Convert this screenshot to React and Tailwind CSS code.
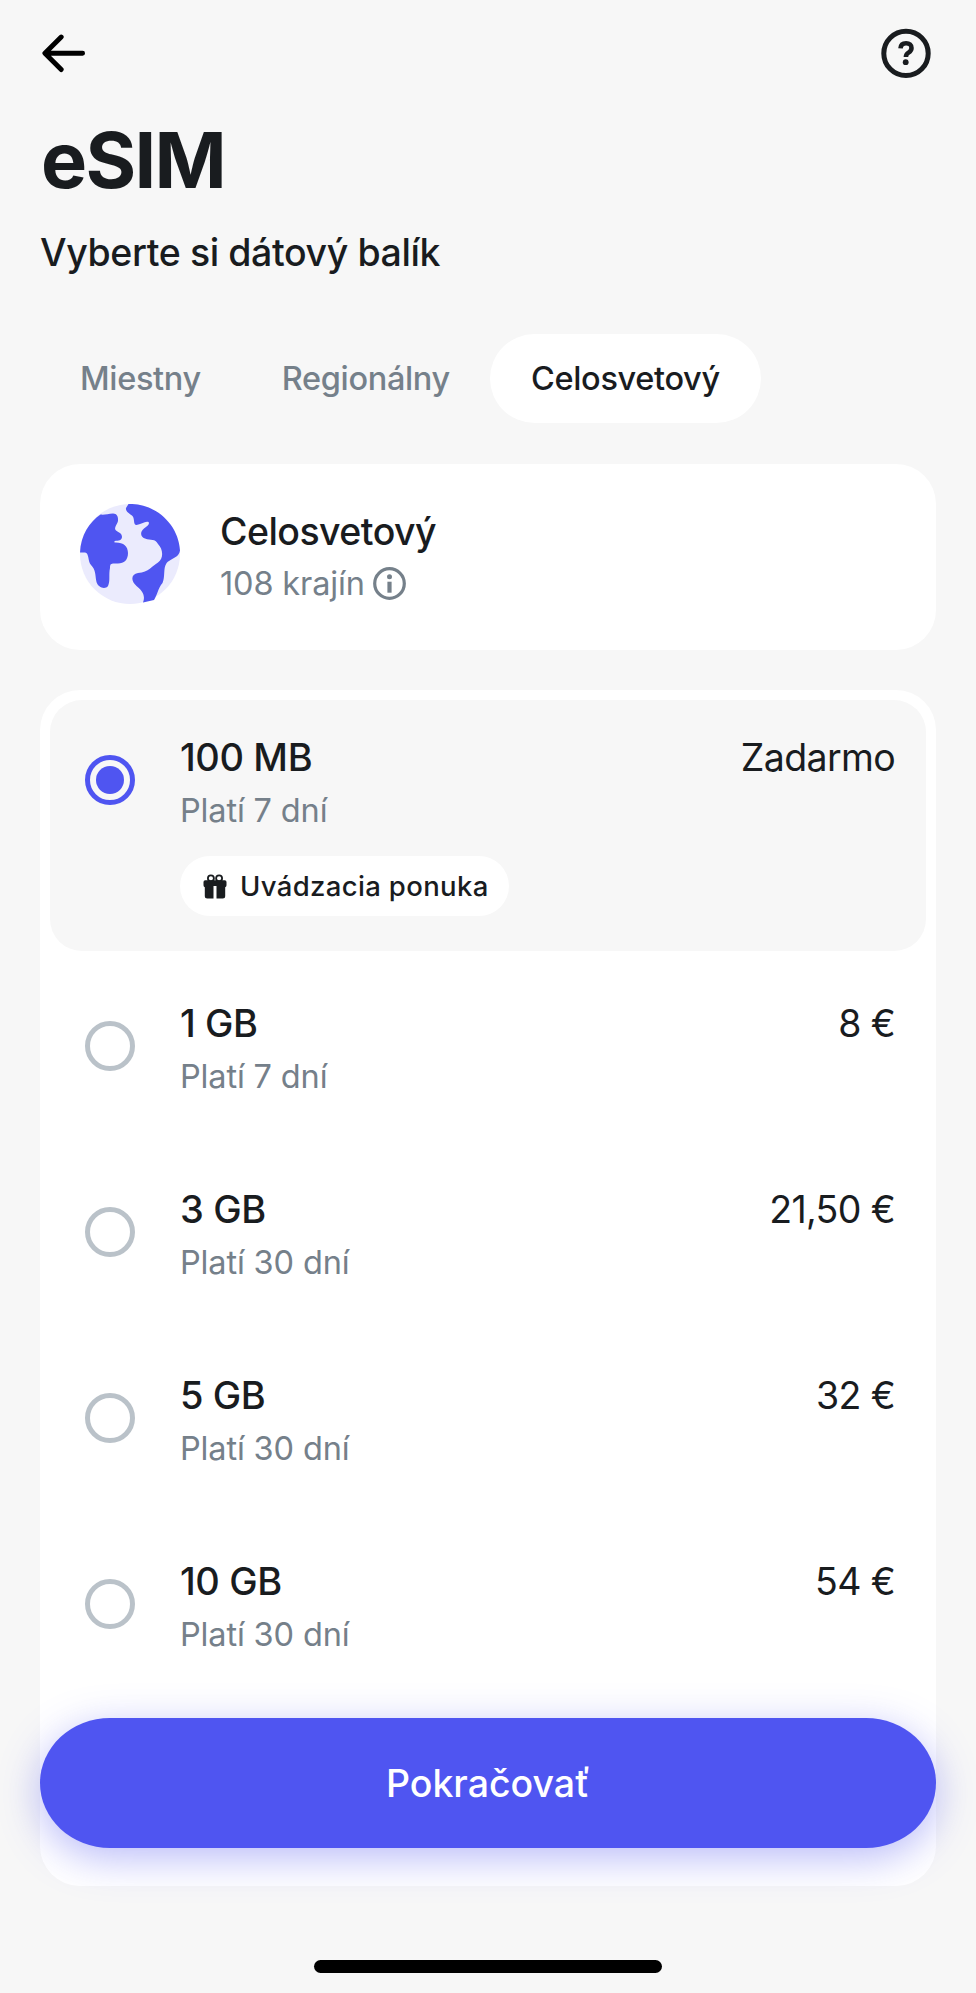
const plans = [
  { size: '1 GB', validity: 'Platí 7 dní', price: '8 €' },
  { size: '3 GB', validity: 'Platí 30 dní', price: '21,50 €' },
  { size: '5 GB', validity: 'Platí 30 dní', price: '32 €' },
  { size: '10 GB', validity: 'Platí 30 dní', price: '54 €' },
];

function BackIcon() {
  return (
    <svg width="45" height="40" viewBox="0 0 45 40" fill="none" stroke="#000" strokeWidth="4.9" strokeLinecap="round" strokeLinejoin="round">
      <path d="M41.600 20.300H4.200M20.200 4 3.900 20.300 20.200 36.600" />
    </svg>
  );
}

function HelpIcon() {
  return (
    <svg width="50" height="51" viewBox="0 0 50 51" fill="none">
      <circle cx="25" cy="25.400" r="22.200" stroke="#191c1f" strokeWidth="5" />
      <path d="M19.500 20.400C19.700 17 21.800 15.200 25.100 15.200C28.400 15.200 30.500 17.100 30.500 19.900C30.500 22.200 29.300 23.400 27.500 24.600C25.600 25.800 24.900 26.700 24.900 29.100" stroke="#191c1f" strokeWidth="4.600" />
      <circle cx="24.700" cy="34.200" r="2.900" fill="#191c1f" />
    </svg>
  );
}

function GlobeIcon() {
  return (
    <svg width="100" height="100" viewBox="0 0 100 100">
      <circle cx="50" cy="50" r="50" fill="#ebebfd" />
      <path fill="#4f55f1" d="M20.500 10.500C24 11 28 10 33 9.500C37 9.500 38.500 13 38 17C37 21 33.500 24 36 26.500C39 29 42 29 42 33C41.500 36.500 39 36.500 34.500 37V38.500C43 38 48 42 48 49C48 56 44 59.500 38 59.500C32 59.500 30 58.500 30 64C28.500 71 30.500 77 28 82C25 86 18 83.500 16.500 78C15 71 16 66 11 61C7.500 58 9.500 49 5 48.500L0 48.500C.8 31 9.500 18 20.500 10.500Z" />
      <path fill="#4f55f1" d="M48.500 0C74 -1 98.500 19 100 46.500C99 53 93 54 89 57C82 61 86 72 82.500 79C78 84 77 92 74 96L63 98.500C66 91 61.500 86 56.500 82C50.500 77 51 70 58 69C69 68 72 62 78 58.500C84 54 83 45 78 40C75 34 71 37 65 34.500C60 33 60 27.500 64 24.500C67.500 22 70 20 68.500 18C66 16.500 61 20 56.500 21C53 21 55 15 52.500 12C49 9 45.500 7.500 46 4Z" />
    </svg>
  );
}

function InfoIcon() {
  return (
    <svg width="33" height="33" viewBox="0 0 33 33" fill="none">
      <circle cx="16.500" cy="16.500" r="14.800" stroke="#75808a" strokeWidth="3.200" />
      <circle cx="16.500" cy="9.800" r="2.500" fill="#75808a" />
      <path d="M16.500 14.700V25.700" stroke="#75808a" strokeWidth="4.200" />
    </svg>
  );
}

function GiftIcon() {
  return (
    <svg width="24" height="25" viewBox="0 0 24 25" fill="none">
      <circle cx="7.900" cy="4.300" r="3" stroke="#191c1f" strokeWidth="1.800" />
      <circle cx="16.100" cy="4.300" r="3" stroke="#191c1f" strokeWidth="1.800" />
      <path d="M2.200 6.200h19.600a1.700 1.700 0 0 1 1.700 1.700v3.400a2 2 0 0 1-1.300 1.900v8.700a2.500 2.500 0 0 1-2.500 2.500h-6.200V12h-3v12.400H4.300a2.500 2.500 0 0 1-2.500-2.500v-8.700A2 2 0 0 1 .5 11.300V7.900A1.700 1.700 0 0 1 2.200 6.200Z" fill="#191c1f" />
    </svg>
  );
}

function Plan({ size, validity, price }) {
  return (
    <div className="flex h-[186px] pr-[41px] pl-[45px] pt-[38px]">
      <div className="mt-[23px] size-[50px] shrink-0 rounded-full border-[5px] border-[#bac2c9]" />
      <div className="ml-[45px] grow">
        <div className="text-[38px] leading-[50px] font-medium tracking-[-0.4px]">{size}</div>
        <div className="mt-[5.500px] text-[32.5px] leading-[45px] tracking-[-0.15px] text-[#75808a]">{validity}</div>
      </div>
      <div className="pt-px text-[37.5px] leading-[50px] tracking-[-0.65px]">{price}</div>
    </div>
  );
}

export default function App() {
  return (
    <div className="flex h-[1993px] w-[976px] flex-col overflow-hidden bg-[#f7f7f7] px-[40px] font-['Inter',sans-serif] text-[#191c1f]">
      <header className="flex h-[107px] items-center justify-between pr-[5px] pb-px pl-px">
        <BackIcon />
        <HelpIcon />
      </header>
      <h1 className="mt-[3px] pl-px text-[77.5px] leading-[100px] font-bold tracking-[-1.7px]">eSIM</h1>
      <p className="mt-[18px] text-[37.5px] leading-[50px] font-medium tracking-[-0.4px]">Vyberte si dátový balík</p>

      <nav className="mt-[56px] flex h-[89px] items-center text-[32.5px] font-medium tracking-[-0.35px] text-[#75808a]">
        <span className="pt-px pl-[40px]">Miestny</span>
        <span className="pt-px pl-[81px]">Regionálny</span>
        <span className="ml-[40px] flex h-[89px] w-[271px] items-center justify-center rounded-full bg-white pt-px text-[#191c1f]">Celosvetový</span>
      </nav>

      <section className="mt-[41px] flex h-[186px] shrink-0 rounded-[40px] bg-white px-[40px] pt-[40px]">
        <GlobeIcon />
        <div className="mt-[3px] ml-[40px]">
          <div className="text-[37.5px] leading-[50px] font-medium tracking-[-0.55px]">Celosvetový</div>
          <div className="mt-[4px] flex items-center gap-[8px] text-[32.5px] leading-[45px] tracking-[-0.15px] text-[#75808a]">
            108 krajín
            <InfoIcon />
          </div>
        </div>
      </section>

      <section className="mt-[40px] h-[1196px] shrink-0 rounded-[40px] bg-white pt-[10px]">
        <div className="mx-[10px] flex h-[251px] rounded-[32px] bg-[#f7f7f7] pt-[32px] pr-[31px] pl-[35px]">
          <div className="mt-[23px] flex size-[50px] shrink-0 items-center justify-center rounded-full border-[5px] border-[#4f55f1]">
            <div className="size-[28px] rounded-full bg-[#4f55f1]" />
          </div>
          <div className="ml-[45px] grow">
            <div className="text-[38px] leading-[50px] font-medium tracking-[-0.4px]">100 MB</div>
            <div className="mt-[5.500px] text-[32.5px] leading-[45px] tracking-[-0.15px] text-[#75808a]">Platí 7 dní</div>
            <div className="mt-[23.5px] flex h-[60px] w-[329px] items-center gap-[13px] rounded-full bg-white pl-[23px] text-[27.5px] font-medium tracking-[0.35px] whitespace-nowrap">
              <GiftIcon />
              <span className="pt-px">Uvádzacia ponuka</span>
            </div>
          </div>
          <div className="pt-px text-[37.5px] leading-[50px] tracking-[-0.65px]">Zadarmo</div>
        </div>
        <div className="mt-[9px]">
          {plans.map((plan) => (
            <Plan key={plan.size} {...plan} />
          ))}
        </div>
      </section>

      <button className="relative -mt-[168px] flex h-[130px] w-full shrink-0 items-center justify-center rounded-[70px/65px] bg-[#4f55f1] pt-[2px] text-[37.5px] font-medium text-white shadow-[0_10px_40px_rgba(79,85,241,0.4)]">
        Pokračovať
      </button>
      <div className="mt-[112px] h-[13px] w-[348px] shrink-0 self-center rounded-full bg-black" />
    </div>
  );
}
